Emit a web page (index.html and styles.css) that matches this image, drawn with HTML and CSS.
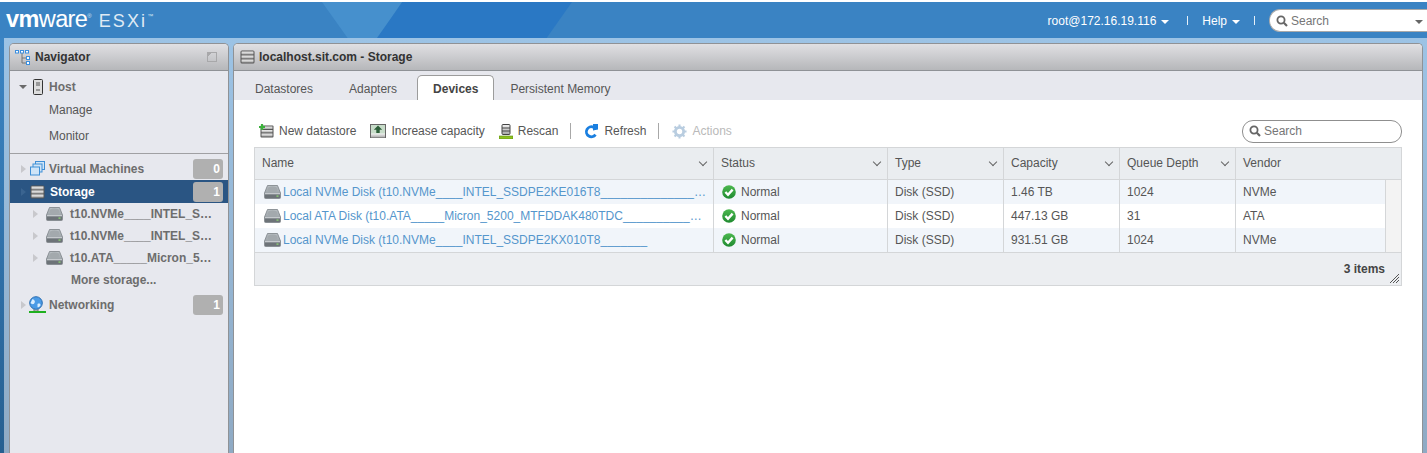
FILE: index.html
```html
<!DOCTYPE html>
<html lang="en">
<head>
    <meta charset="UTF-8">
    <title>localhost.sit.com - VMware ESXi</title>
    <link rel="stylesheet" href="styles.css">
</head>
<body>
    <svg class="defs" width="0" height="0">
        <defs>
            <linearGradient id="g-steel" x1="0" y1="0" x2="0" y2="1">
                <stop offset="0" stop-color="#f4f4f4"/>
                <stop offset="1" stop-color="#a6a6a6"/>
            </linearGradient>
            <linearGradient id="g-disk" x1="0" y1="0" x2="0" y2="1">
                <stop offset="0" stop-color="#b9bfc3"/>
                <stop offset="1" stop-color="#8e959a"/>
            </linearGradient>
            <linearGradient id="g-ok" x1="0" y1="0" x2="0" y2="1">
                <stop offset="0" stop-color="#4cb84f"/>
                <stop offset="1" stop-color="#1f8a30"/>
            </linearGradient>
        </defs>
        <symbol id="i-db" viewBox="0 0 15 14">
            <rect x="0.5" y="0.5" width="14" height="13" rx="1.5" fill="#555"/>
            <rect x="1.5" y="1.5" width="12" height="3" fill="url(#g-steel)"/>
            <rect x="1.5" y="5.5" width="12" height="3" fill="url(#g-steel)"/>
            <rect x="1.5" y="9.5" width="12" height="3" fill="url(#g-steel)"/>
        </symbol>
        <symbol id="i-disk" viewBox="0 0 17 14">
            <path d="M3.5 0.5h10l3 7.5v4.5a1 1 0 0 1-1 1h-14a1 1 0 0 1-1-1V8z" fill="url(#g-disk)" stroke="#7b8186" stroke-width="0.8"/>
            <ellipse cx="8.5" cy="4.4" rx="5" ry="2.8" fill="#a3a9ad"/>
            <rect x="1" y="8.4" width="15" height="1" fill="#dfe2e4"/>
            <rect x="1" y="9.4" width="15" height="3.6" fill="#6d7378"/>
            <rect x="12.5" y="10.4" width="2" height="1.4" fill="#8ccf73"/>
        </symbol>
        <symbol id="i-check" viewBox="0 0 14 14">
            <circle cx="7" cy="7" r="6.8" fill="url(#g-ok)"/>
            <path d="M3.4 7l2.6 2.8 4.6-5.2" fill="none" stroke="#fff" stroke-width="2.4"/>
        </symbol>
        <symbol id="i-search" viewBox="0 0 12 12">
            <circle cx="5" cy="5" r="3.6" fill="none" stroke="#666" stroke-width="1.8"/>
            <path d="M7.8 7.8l3.2 3.2" stroke="#666" stroke-width="2.2"/>
        </symbol>
    </svg>

    <header class="topbar">
        <div class="logo"><span class="logo-vm">vm</span><span class="logo-ware">ware</span><sup class="logo-reg">®</sup><span class="logo-esxi">ESXi</span><sup class="logo-tm">™</sup></div>
        <div class="topbar-right">
            <span class="top-link">root@172.16.19.116 <i class="caret"></i></span>
            <span class="top-sep"></span>
            <span class="top-link">Help <i class="caret"></i></span>
            <span class="top-sep top-sep-last"></span>
            <div class="top-search">
                <svg class="search-icon"><use href="#i-search"/></svg>
                <span>Search</span>
                <i class="caret caret-dark"></i>
            </div>
        </div>
    </header>

    <div class="main">
        <!-- Navigator -->
        <aside class="panel navigator">
            <div class="panel-head">
                <svg class="nav-logo" width="16" height="15" viewBox="0 0 16 15">
                    <path d="M7 3v10h4M7 8h4" fill="none" stroke="#777"/>
                    <g fill="#fff" stroke="#3b8fe0">
                        <rect x="0.5" y="0.5" width="3" height="2.5"/>
                        <rect x="5.5" y="0.5" width="3" height="2.5"/>
                        <rect x="10.5" y="0.5" width="3" height="2.5"/>
                        <rect x="11.5" y="6.5" width="3" height="3"/>
                        <rect x="11.5" y="11.5" width="3" height="3"/>
                    </g>
                </svg>
                <span>Navigator</span>
                <span class="pin"></span>
            </div>
            <div class="nav-group">
                <div class="nav-row nav-top">
                    <i class="tri-down"></i>
                    <svg class="nav-icon icon-host" width="10" height="16" viewBox="0 0 10 16">
                        <rect x="0.5" y="0.5" width="9" height="15" rx="1" fill="#ddd" stroke="#333"/>
                        <path d="M3 4h4M3 6h4M3 11h4" stroke="#555"/>
                    </svg>
                    <span>Host</span>
                </div>
                <div class="nav-sub">Manage</div>
                <div class="nav-sub">Monitor</div>
            </div>
            <div class="nav-group nav-tree">
                <div class="nav-row nav-top">
                    <i class="tri-right"></i>
                    <svg class="nav-icon" width="15" height="15" viewBox="0 0 15 15">
                        <rect x="5.5" y="0.5" width="9" height="8" fill="#cfe4f7" stroke="#3f8fd6"/>
                        <rect x="3" y="3" width="9" height="8" fill="#cfe4f7" stroke="#3f8fd6"/>
                        <rect x="0.5" y="6" width="9" height="8" fill="#cfe4f7" stroke="#3f8fd6"/>
                    </svg>
                    <span>Virtual Machines</span>
                    <b class="badge">0</b>
                </div>
                <div class="nav-row nav-top selected">
                    <i class="tri-right"></i>
                    <svg class="nav-icon icon-storage" width="15" height="14"><use href="#i-db"/></svg>
                    <span>Storage</span>
                    <b class="badge">1</b>
                </div>
                <div class="nav-row nav-child">
                    <i class="tri-right"></i>
                    <svg class="nav-icon" width="17" height="14"><use href="#i-disk"/></svg>
                    <span>t10.NVMe____INTEL_S…</span>
                </div>
                <div class="nav-row nav-child">
                    <i class="tri-right"></i>
                    <svg class="nav-icon" width="17" height="14"><use href="#i-disk"/></svg>
                    <span>t10.NVMe____INTEL_S…</span>
                </div>
                <div class="nav-row nav-child">
                    <i class="tri-right"></i>
                    <svg class="nav-icon" width="17" height="14"><use href="#i-disk"/></svg>
                    <span>t10.ATA_____Micron_5…</span>
                </div>
                <div class="nav-more">More storage...</div>
                <div class="nav-row nav-top">
                    <i class="tri-right"></i>
                    <svg class="nav-icon icon-net" width="17" height="17" viewBox="0 0 17 17">
                        <path d="M5 13v2h4v-2" fill="#ddd" stroke="#777"/>
                        <circle cx="7" cy="7" r="6.3" fill="#4b9be6" stroke="#2a6cb0"/>
                        <path d="M3.5 3c2 1 3 2 2 4s-3 1-4 0M8.5 8c2-1 3 0 3 1s-2 3-3 2z" fill="#dbeeff"/>
                        <rect x="0" y="15" width="17" height="2" fill="#1fb01f"/>
                    </svg>
                    <span>Networking</span>
                    <b class="badge">1</b>
                </div>
            </div>
        </aside>

        <!-- Storage view -->
        <section class="panel content">
            <div class="panel-head">
                <svg class="head-icon" width="15" height="14"><use href="#i-db"/></svg>
                <span>localhost.sit.com - Storage</span>
            </div>
            <nav class="tabs">
                <a class="tab">Datastores</a>
                <a class="tab">Adapters</a>
                <a class="tab active">Devices</a>
                <a class="tab">Persistent Memory</a>
            </nav>
            <div class="view">
                <div class="toolbar">
                    <span class="tool">
                        <svg width="15" height="14" viewBox="0 0 15 14">
                            <rect x="1.5" y="1.5" width="13" height="12" rx="1" fill="#555"/>
                            <rect x="2.5" y="2.5" width="11" height="2.5" fill="url(#g-steel)"/>
                            <rect x="2.5" y="6" width="11" height="2.5" fill="url(#g-steel)"/>
                            <rect x="2.5" y="9.5" width="11" height="3" fill="url(#g-steel)"/>
                            <path d="M3 0v6M0 3h6" stroke="#3cb13c" stroke-width="2.2"/>
                        </svg>
                        New datastore
                    </span>
                    <span class="tool tool-wide">
                        <svg width="16" height="14" viewBox="0 0 16 14">
                            <rect x="0.5" y="0.5" width="15" height="13" fill="#c7dcc9" stroke="#666"/>
                            <rect x="1" y="9.5" width="14" height="4" fill="url(#g-steel)"/>
                            <path d="M8 1.5l4.200 4.200H9.700V9H6.300V5.700H3.800z" fill="#2d5f39"/>
                        </svg>
                        Increase capacity
                    </span>
                    <span class="tool tool-tight">
                        <svg width="14" height="15" viewBox="0 0 14 15">
                            <rect x="3" y="0.5" width="8" height="10" rx="1" fill="url(#g-steel)" stroke="#444"/>
                            <path d="M3 4h8M3 7h8" stroke="#444"/>
                            <rect x="0" y="12" width="14" height="3" fill="#8dc21f" stroke="#5c8a12" stroke-width="0.6"/>
                        </svg>
                        Rescan
                    </span>
                    <span class="tool-sep"></span>
                    <span class="tool tool-tight">
                        <svg width="15" height="15" viewBox="0 0 15 15">
                            <path d="M11.5 10.6a5 5 0 1 1-2-7.4" fill="none" stroke="#1a7fe0" stroke-width="2.8"/>
                            <path d="M9 0v6.4l5-1V0z" fill="#1a7fe0"/>
                        </svg>
                        Refresh
                    </span>
                    <span class="tool-sep"></span>
                    <span class="tool disabled">
                        <svg width="15" height="15" viewBox="0 0 16 16">
                            <circle cx="8" cy="8" r="4.4" fill="none" stroke="#b9cde0" stroke-width="3"/>
                            <path d="M8 0.5v3M8 12.5v3M0.5 8h3M12.5 8h3M2.7 2.7l2.100 2.100M11.200 11.200l2.100 2.100M2.700 13.300l2.100-2.100M11.200 4.800l2.100-2.100" stroke="#b9cde0" stroke-width="2.2"/>
                        </svg>
                        Actions
                    </span>
                    <div class="grid-search">
                        <svg class="search-icon"><use href="#i-search"/></svg>
                        <span>Search</span>
                    </div>
                </div>

                <div class="grid">
                    <div class="grid-row grid-head">
                        <div class="cell">Name<i class="chev"></i></div>
                        <div class="cell">Status<i class="chev"></i></div>
                        <div class="cell">Type<i class="chev"></i></div>
                        <div class="cell">Capacity<i class="chev"></i></div>
                        <div class="cell">Queue Depth<i class="chev"></i></div>
                        <div class="cell cell-vendor">Vendor</div>
                    </div>
                    <div class="grid-row odd">
                        <div class="cell"><svg class="disk" width="17" height="14"><use href="#i-disk"/></svg><a class="link">Local NVMe Disk (t10.NVMe____INTEL_SSDPE2KE016T8______________…</a></div>
                        <div class="cell"><svg class="ok" width="14" height="14"><use href="#i-check"/></svg>Normal</div>
                        <div class="cell">Disk (SSD)</div>
                        <div class="cell">1.46 TB</div>
                        <div class="cell">1024</div>
                        <div class="cell">NVMe</div>
                        <div class="cell gutter"></div>
                    </div>
                    <div class="grid-row">
                        <div class="cell"><svg class="disk" width="17" height="14"><use href="#i-disk"/></svg><a class="link">Local ATA Disk (t10.ATA_____Micron_5200_MTFDDAK480TDC__________…</a></div>
                        <div class="cell"><svg class="ok" width="14" height="14"><use href="#i-check"/></svg>Normal</div>
                        <div class="cell">Disk (SSD)</div>
                        <div class="cell">447.13 GB</div>
                        <div class="cell">31</div>
                        <div class="cell">ATA</div>
                        <div class="cell gutter"></div>
                    </div>
                    <div class="grid-row odd">
                        <div class="cell"><svg class="disk" width="17" height="14"><use href="#i-disk"/></svg><a class="link">Local NVMe Disk (t10.NVMe____INTEL_SSDPE2KX010T8_______</a></div>
                        <div class="cell"><svg class="ok" width="14" height="14"><use href="#i-check"/></svg>Normal</div>
                        <div class="cell">Disk (SSD)</div>
                        <div class="cell">931.51 GB</div>
                        <div class="cell">1024</div>
                        <div class="cell">NVMe</div>
                        <div class="cell gutter"></div>
                    </div>
                    <div class="grid-foot">
                        <span>3 items</span>
                        <svg class="grip" width="9" height="9" viewBox="0 0 9 9"><path d="M0 9l9-9M3 9l6-6M6 9l3-3" stroke="#555"/></svg>
                    </div>
                </div>
            </div>
        </section>
    </div>
</body>
</html>
```

FILE: styles.css
```css
* {
    box-sizing: border-box;
}
html, body {
    height: 100%;
}
body {
    margin: 0;
    height: 453px;
    overflow: hidden;
    font-family: "Liberation Sans", Arial, sans-serif;
    font-size: 12px;
    color: #565656;
    background: #fff;
    display: flex;
    flex-direction: column;
    padding-top: 2px;
}
.defs {
    position: absolute;
}
i {
    display: inline-block;
}

/* top bar */
.topbar {
    position: relative;
    flex: none;
    height: 36px;
    display: flex;
    align-items: center;
    justify-content: space-between;
    background: #3a83c3;
    color: #fff;
}
.topbar::before {
    content: "";
    position: absolute;
    top: 0;
    bottom: 0;
    left: 322px;
    width: 80px;
    background: #4690cd;
    clip-path: polygon(0 0, 100% 0, 70% 100%, 32% 100%);
}
.topbar::after {
    content: "";
    position: absolute;
    top: 0;
    bottom: 0;
    left: 377px;
    width: 195px;
    background: #2a78c4;
    clip-path: polygon(13% 0, 100% 0, 87% 100%, 0 100%);
}
.logo, .topbar-right {
    position: relative;
    z-index: 1;
}
.logo {
    margin-left: 6px;
    color: #fff;
    white-space: nowrap;
    line-height: 36px;
    margin-top: 2px;
}
.logo-vm {
    font-size: 23.5px;
    font-weight: 700;
    letter-spacing: -0.6px;
}
.logo-ware {
    font-size: 23.5px;
    letter-spacing: -0.6px;
}
.logo-reg, .logo-tm {
    font-size: 6px;
    vertical-align: 9px;
    line-height: 0;
    color: #d6e6f4;
}
.logo-esxi {
    font-size: 18px;
    letter-spacing: 2.1px;
    color: #dfeaf4;
    margin-left: 7px;
}
.topbar-right {
    display: flex;
    align-items: center;
    padding-top: 1px;
}
.top-link {
    white-space: nowrap;
    display: flex;
    align-items: center;
    gap: 5px;
}
.top-sep {
    width: 1px;
    height: 9px;
    background: #e6f0f8;
    margin: 0 14px 0 18px;
}
.top-sep-last {
    margin: 0 14px;
}
.caret {
    width: 0;
    height: 0;
    border-left: 4px solid transparent;
    border-right: 4px solid transparent;
    border-top: 4px solid #fff;
    margin-top: 2px;
}
.caret-dark {
    border-top-color: #666;
    margin-left: auto;
    margin-right: 4px;
}
.top-search {
    width: 158px;
    height: 23px;
    background: #fff;
    border: 1px solid #a9a9a9;
    border-right: none;
    border-radius: 11px 0 0 11px;
    display: flex;
    align-items: center;
    padding-left: 6px;
    color: #767676;
}
.search-icon {
    width: 12px;
    height: 12px;
    margin-right: 3px;
    flex: none;
}

/* main frame */
.main {
    flex: 1;
    min-height: 0;
    display: flex;
    gap: 4px;
    padding: 5px 4px 0 9px;
    background: linear-gradient(#3c85c4, #265f90) left top / 4px 100% no-repeat, linear-gradient(#9cc3e5, #8faac4);
}
.panel {
    display: flex;
    flex-direction: column;
    border: 1px solid #8f9296;
    border-bottom: none;
    border-radius: 5px 5px 0 0;
    overflow: hidden;
    min-width: 0;
}
.panel-head {
    flex: none;
    height: 27px;
    display: flex;
    align-items: center;
    font-weight: 700;
    color: #333;
    background: linear-gradient(#e0e0e3, #b6b7ba);
    border-bottom: 1px solid #8f9296;
}

/* navigator */
.navigator {
    width: 220px;
    flex: none;
    background: #e7e8ee;
}
.nav-logo {
    margin: 0 4px 0 5px;
}
.pin {
    width: 10px;
    height: 10px;
    margin-left: auto;
    margin-right: 11px;
    border: 1px solid #a8a8aa;
    background: linear-gradient(135deg, #a8a8aa 0 25%, transparent 25%);
}
.nav-group {
    flex: none;
    border-bottom: 1px solid #a0a0a3;
    padding: 4px 0 4px;
}
.nav-tree {
    border-bottom: none;
    padding: 3px 0 0;
}
.nav-row {
    display: flex;
    align-items: center;
    height: 23px;
    font-weight: 700;
    color: #6d6d6d;
    padding-left: 8px;
}
.nav-row i {
    flex: none;
}
.nav-icon {
    flex: none;
}
.nav-top .nav-icon {
    margin-left: 3px;
    margin-right: 4px;
}
.nav-top .icon-host {
    margin-left: 6px;
    margin-right: 6px;
}
.nav-top .icon-storage {
    margin-right: 5px;
}
.nav-top .icon-net {
    margin-left: 2px;
    margin-right: 3px;
}
.tri-down {
    width: 0;
    height: 0;
    border-left: 4px solid transparent;
    border-right: 4px solid transparent;
    border-top: 4px solid #6a6a6a;
    margin-left: 1px;
}
.tri-right {
    width: 0;
    height: 0;
    border-top: 4px solid transparent;
    border-bottom: 4px solid transparent;
    border-left: 5px solid #c8c8cc;
    margin-left: 3px;
    margin-right: 1px;
}
.nav-sub {
    height: 25.5px;
    line-height: 25.5px;
    padding-left: 39px;
    color: #565656;
}
.selected {
    background: #2a5583;
    color: #fff;
}
.selected .tri-right {
    border-left-color: #3a6490;
}
.badge {
    width: 30px;
    height: 20px;
    margin-left: auto;
    margin-right: 5px;
    background: #b0b0b0;
    border-radius: 3px;
    color: #fff;
    text-align: right;
    padding-right: 3px;
    line-height: 20px;
    font-weight: 700;
}
.nav-child {
    height: 22px;
    padding-left: 20px;
}
.nav-child .nav-icon {
    margin: 0 7px 0 7px;
}
.nav-more {
    height: 22px;
    line-height: 22px;
    padding-left: 61px;
    font-weight: 700;
    color: #6d6d6d;
}
.nav-more + .nav-row {
    margin-top: 2px;
}

/* content panel */
.content {
    flex: 1;
    background: #fff;
}
.head-icon {
    margin: 0 4px 0 6px;
}
.tabs {
    flex: none;
    height: 29px;
    display: flex;
    align-items: flex-end;
    background: #e7e8ee;
    padding-left: 3px;
}
.tab {
    height: 25px;
    line-height: 27px;
    padding: 0 17px;
    color: #565656;
    border: 1px solid transparent;
    border-bottom: none;
    border-radius: 5px 5px 0 0;
}
.tab.active {
    background: #fff;
    border-color: #9c9c9c;
    font-weight: 700;
    color: #444;
    padding: 0 15px;
    margin: 0 -2px 0 2px;
}
.view {
    flex: 1;
    padding: 18px 20px 0 20px;
}
.toolbar {
    display: flex;
    align-items: center;
    height: 26px;
    padding-left: 5px;
}
.tool {
    display: flex;
    align-items: center;
    gap: 5px;
    margin-right: 14px;
    white-space: nowrap;
}
.tool-tight {
    margin-right: 12px;
}
.tool.disabled {
    color: #b9b9b9;
}
.tool-sep {
    width: 1px;
    height: 16px;
    background: #a8a8a8;
    margin-right: 13px;
}
.grid-search {
    margin-left: auto;
    width: 160px;
    height: 23px;
    border: 1px solid #8f8f8f;
    border-radius: 11px;
    display: flex;
    align-items: center;
    padding-left: 6px;
    color: #767676;
}

/* device table */
.grid {
    border: 1px solid #d4d6d8;
    background: #eceef1;
    width: 1148px;
    margin-top: 3px;
}
.grid-row {
    display: grid;
    grid-template-columns: 459px 174px 116px 116px 116px 150px 15px;
    height: 24px;
    background: #fff;
}
.grid-row.odd {
    background: #f1f5fa;
}
.grid-head {
    height: 32px;
    background: #eaedf0;
    border-bottom: 1px solid #d4d6d8;
}
.cell {
    display: flex;
    align-items: center;
    padding-left: 7px;
    border-right: 1px solid #d4d6d8;
    min-width: 0;
    white-space: nowrap;
    overflow: hidden;
}
.grid-head .cell {
    color: #555;
    padding-bottom: 2px;
}
.grid-head .cell-vendor {
    grid-column: span 2;
    border-right: none;
}
.gutter {
    background: #f3f3f3;
    border-right: none;
    padding: 0;
}
.chev {
    width: 6px;
    height: 6px;
    margin-left: auto;
    margin-right: 7px;
    margin-top: -2px;
    border-right: 1px solid #666;
    border-bottom: 1px solid #666;
    transform: rotate(45deg);
    flex: none;
}
.disk {
    margin: 0 2px 0 2px;
    flex: none;
}
.link {
    color: #5596cc;
}
.ok {
    margin: 0 5px 0 1px;
    flex: none;
}
.grid-foot {
    height: 33px;
    border-top: 1px solid #d4d6d8;
    display: flex;
    align-items: center;
    justify-content: flex-end;
    padding-right: 16px;
    font-weight: 700;
    color: #444;
    position: relative;
}
.grip {
    position: absolute;
    right: 2px;
    bottom: 2px;
}
```
